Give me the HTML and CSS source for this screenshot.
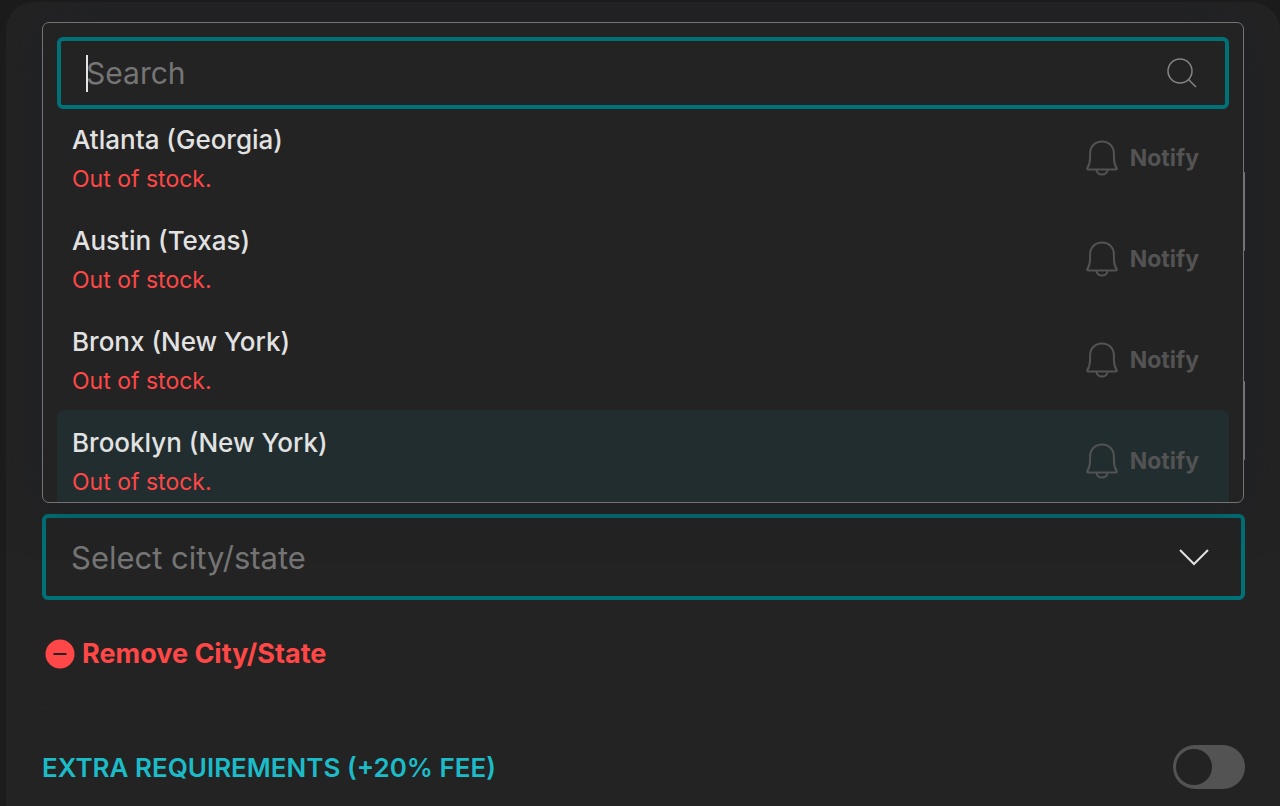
FILE: index.html
```
<!DOCTYPE html>
<html lang="en">

<head>
  <title>Select city/state</title>
  <meta charset="utf-8">
  <meta name="viewport" content="width=device-width, initial-scale=1.0">
  <link rel="stylesheet" href="styles.css">
</head>

<body>
  <svg class="sprite" aria-hidden="true">
    <symbol id="bell" viewBox="0 0 32 36">
      <path d="M1.2 28.6C3.4 25 4.1 22 4.1 17.5V13.5C4.1 6.2 9.3 1.5 16 1.5S27.9 6.2 27.9 13.5V17.5C27.9 22 28.6 25 30.8 28.6Q30.8 29.5 29.9 29.5H2.1Q1.2 29.5 1.2 28.6Z" />
      <path d="M10.5 29.5C10.5 32.7 13 34.5 16 34.5S21.5 32.7 21.5 29.5" />
    </symbol>
  </svg>

  <main class="card">
    <div class="dropdown">
      <div class="dropdown-inner">
        <div class="search">
          <span class="caret"></span>
          <input type="text" class="search-input" placeholder="Search" aria-label="Search">
          <svg class="search-icon" viewBox="0 0 32 32" aria-hidden="true">
            <circle cx="14" cy="14" r="12" />
            <path d="M22.5 22.5L30 30" />
          </svg>
        </div>

        <ul class="cities">
          <li class="city">
            <div>
              <div class="city-name">Atlanta (Georgia)</div>
              <div class="city-stock">Out of stock.</div>
            </div>
            <button type="button" class="notify"><svg class="bell" aria-hidden="true"><use href="#bell" /></svg>Notify</button>
          </li>
          <li class="city">
            <div>
              <div class="city-name">Austin (Texas)</div>
              <div class="city-stock">Out of stock.</div>
            </div>
            <button type="button" class="notify"><svg class="bell" aria-hidden="true"><use href="#bell" /></svg>Notify</button>
          </li>
          <li class="city">
            <div>
              <div class="city-name">Bronx (New York)</div>
              <div class="city-stock">Out of stock.</div>
            </div>
            <button type="button" class="notify"><svg class="bell" aria-hidden="true"><use href="#bell" /></svg>Notify</button>
          </li>
          <li class="city active">
            <div>
              <div class="city-name">Brooklyn (New York)</div>
              <div class="city-stock">Out of stock.</div>
            </div>
            <button type="button" class="notify"><svg class="bell" aria-hidden="true"><use href="#bell" /></svg>Notify</button>
          </li>
        </ul>
      </div>
      <span class="thumb thumb-top"></span>
      <span class="thumb thumb-bottom"></span>
    </div>

    <div class="select-wrap">
      <select class="city-select" aria-label="City or state">
        <option>Select city/state</option>
      </select>
      <svg class="chevron" viewBox="0 0 32 18" aria-hidden="true">
        <path d="M2 2L16 16L30 2" />
      </svg>
    </div>

    <button type="button" class="remove">
      <svg class="remove-icon" viewBox="0 0 30 30" aria-hidden="true">
        <circle cx="15" cy="15" r="14.5" />
        <path d="M8.5 15H21.5" />
      </svg>
      Remove City/State
    </button>

    <div class="extra">
      <label class="extra-label" for="extra">EXTRA REQUIREMENTS (+20% FEE)</label>
      <input type="checkbox" class="toggle" id="extra">
    </div>
  </main>
</body>

</html>
```
FILE: styles.css
```
* {
  box-sizing: border-box;
}

body {
  margin: 0;
  background-color: #1c1c1c;
  color: #e2e2e2;
  font-family: Inter, "Open Sans", sans-serif;
  overflow: hidden;
}

button {
  font-family: inherit;
  background: none;
  border: none;
  padding: 0;
  cursor: pointer;
}

.sprite {
  display: none;
}

.card {
  min-height: calc(100vh - 2px);
  margin: 2px 0 0 6px;
  padding: 20px 35px 16px 36px;
  background-color: #232323;
  border-radius: 28px 28px 0 0;
}

/* open list */
.dropdown {
  position: relative;
  margin-right: 1px;
  border-radius: 7px;
  box-shadow: 0 0 50px rgba(28, 32, 44, 0.6);
}

.dropdown-inner {
  max-height: 481px;
  padding: 14px 14px 0;
  background-color: #232323;
  border: 1px solid #737373;
  border-radius: 7px;
  overflow: hidden;
}

.search {
  position: relative;
  display: flex;
  align-items: center;
  height: 72px;
  padding: 0 27px 0 25px;
  border: 4px solid #007177;
  border-radius: 6px;
}

.search-input {
  flex: 1;
  min-width: 0;
  padding: 0;
  background: none;
  border: none;
  outline: none;
  color: #e2e2e2;
  font-family: inherit;
  font-size: 30px;
}

.search-input::placeholder {
  color: #757575;
  opacity: 1;
}

.caret {
  position: absolute;
  left: 25px;
  top: 14px;
  width: 2px;
  height: 37px;
  background-color: #e2e2e2;
}

.search-icon {
  width: 32px;
  height: 32px;
  fill: none;
  stroke: #858585;
  stroke-width: 1.5;
}

.cities {
  list-style: none;
  margin: -2px 0 0;
  padding: 0;
}

.city {
  display: flex;
  justify-content: space-between;
  padding: 13px 30px 9px 15px;
  border-radius: 7px;
}

.city.active {
  background-color: #212d2e;
}

.city-name {
  font-size: 26px;
  font-weight: 500;
  line-height: 40px;
}

.city-stock {
  color: #ff4747;
  font-size: 23px;
  line-height: 39px;
}

.notify {
  display: flex;
  align-items: center;
  gap: 12px;
  padding-bottom: 4px;
  color: #535353;
  font-size: 23px;
  font-weight: 700;
}

.bell {
  width: 32px;
  height: 36px;
  fill: none;
  stroke: #535353;
  stroke-width: 2;
}

.thumb {
  position: absolute;
  right: -1px;
  width: 2px;
  height: 79px;
  border-radius: 1px;
  background-color: #737373;
}

.thumb-top {
  top: 150px;
}

.thumb-bottom {
  top: 359px;
}

/* closed field */
.select-wrap {
  display: flex;
  align-items: center;
  margin-top: 11px;
}

.city-select {
  width: 100%;
  height: 86px;
  padding: 0 80px 0 25px;
  appearance: none;
  background: none;
  border: 4px solid #007177;
  border-radius: 6px;
  outline: none;
  color: #757575;
  font-family: inherit;
  font-size: 31px;
}

.chevron {
  flex: none;
  width: 32px;
  height: 18px;
  margin-left: -67px;
  margin-right: 35px;
  fill: none;
  stroke: #e2e2e2;
  stroke-width: 2;
  pointer-events: none;
}

.remove {
  display: flex;
  align-items: center;
  gap: 7px;
  margin: 34px 0 34px 3px;
  color: #ff4747;
  font-size: 27px;
  font-weight: 700;
  line-height: 40px;
}

.remove-icon {
  width: 30px;
  height: 30px;
  fill: #ff4747;
  stroke: none;
}

.remove-icon path {
  stroke: #232323;
  stroke-width: 2;
}

.extra {
  display: flex;
  align-items: center;
  justify-content: space-between;
  padding-top: 36px;
  border-top: 1px solid #262626;
}

.extra-label {
  color: #1cbbc8;
  font-size: 26px;
  font-weight: 600;
}

.toggle {
  width: 72px;
  height: 44px;
  margin: 0;
  padding: 4px 3px;
  appearance: none;
  background-color: #535353;
  border-radius: 22px;
  cursor: pointer;
}

.toggle::before {
  content: "";
  display: block;
  width: 36px;
  height: 36px;
  border-radius: 50%;
  background-color: #232323;
}

.toggle:checked {
  background-color: #007177;
}

.toggle:checked::before {
  margin-left: auto;
}
```
